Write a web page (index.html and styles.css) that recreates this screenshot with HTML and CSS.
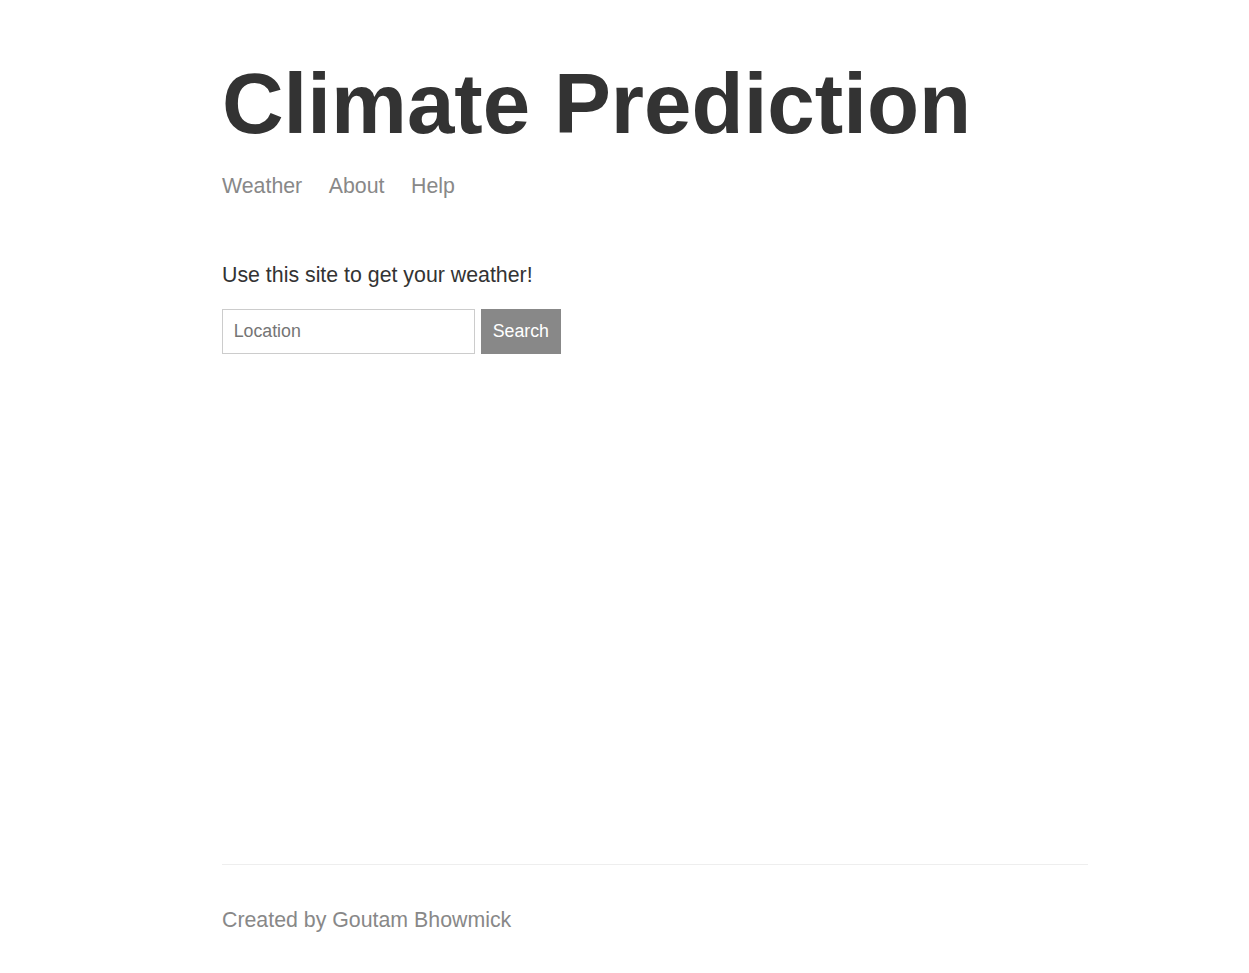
FILE: index.html
```html
<!DOCTYPE html>
<html lang="en">
<head>
<meta charset="utf-8">
<title>Climate Prediction</title>
<link rel="stylesheet" href="styles.css">
</head>
<body>
<div class="page">
  <header class="site-header">
    <h1 class="title">Climate Prediction</h1>
    <nav class="nav">
      <a href="#" class="nav-link">Weather</a>
      <a href="#" class="nav-link">About</a>
      <a href="#" class="nav-link">Help</a>
    </nav>
  </header>
  <main class="main-content">
    <p class="intro">Use this site to get your weather!</p>
    <form class="search-form">
      <input class="location-input" type="text" placeholder="Location">
      <button class="search-button" type="button">Search</button>
    </form>
  </main>
  <footer class="site-footer">
    <p class="credit">Created by Goutam Bhowmick</p>
  </footer>
</div>
</body>
</html>
```

FILE: styles.css
```css
html, body {
  margin: 0;
  padding: 0;
}

body {
  color: #333333;
  font-family: "Liberation Sans", Arial, sans-serif;
  font-size: 21.33px;
  background: #ffffff;
}

.page {
  display: flex;
  flex-direction: column;
  min-height: 100vh;
  box-sizing: border-box;
  width: 866px;
  margin-left: 222px;
}

.site-header {
  margin-bottom: 64px;
}

.title {
  font-size: 85.33px;
  font-weight: bold;
  margin: 55px 0 21.33px;
  line-height: normal;
}

.nav {
  display: flex;
  gap: 26.5px;
  line-height: normal;
}

.nav-link {
  color: #888888;
  text-decoration: none;
}

.main-content {
  flex-grow: 1;
}

.intro {
  margin: 0 0 20.5px;
  line-height: normal;
}

.search-form {
  display: flex;
  gap: 6px;
  margin: 0;
}

.location-input {
  box-sizing: border-box;
  width: 253px;
  height: 45px;
  border: 1px solid #cccccc;
  padding: 0 10.67px;
  font-family: "Liberation Sans", Arial, sans-serif;
  font-size: 17.78px;
  color: #333333;
  outline: none;
  margin: 0;
}

.location-input::placeholder {
  color: #757575;
}

.search-button {
  box-sizing: border-box;
  height: 45px;
  padding: 0 10.67px;
  border: 1px solid #888888;
  background: #888888;
  color: #ffffff;
  font-family: "Liberation Sans", Arial, sans-serif;
  font-size: 17.78px;
  cursor: pointer;
  margin: 0;
}

.site-footer {
  color: #888888;
  border-top: 1px solid #eeeeee;
  margin-top: 21.33px;
  padding: 43px 0 40px;
}

.credit {
  margin: 0;
  line-height: normal;
}
```
